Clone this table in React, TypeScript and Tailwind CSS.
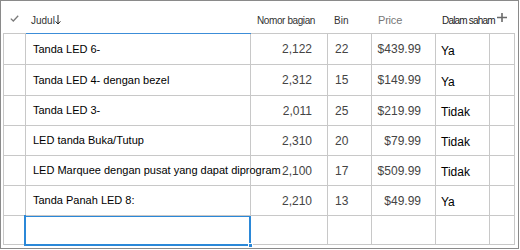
import React from 'react';

type Row = { title: string; part: string; bin: string; price: string; stock: string; h: string };

const rows: Row[] = [
  { title: 'Tanda LED 6-', part: '2,122', bin: '22', price: '$439.99', stock: 'Ya', h: 'h-[31px]' },
  { title: 'Tanda LED 4- dengan bezel', part: '2,312', bin: '15', price: '$149.99', stock: 'Ya', h: 'h-[31px]' },
  { title: 'Tanda LED 3-', part: '2,011', bin: '25', price: '$219.99', stock: 'Tidak', h: 'h-[30px]' },
  { title: 'LED tanda Buka/Tutup', part: '2,310', bin: '20', price: '$79.99', stock: 'Tidak', h: 'h-[30px]' },
  { title: 'LED Marquee dengan pusat yang dapat diprogram', part: '2,100', bin: '17', price: '$509.99', stock: 'Tidak', h: 'h-[30px]' },
  { title: 'Tanda Panah LED 8:', part: '2,210', bin: '13', price: '$49.99', stock: 'Ya', h: 'h-[30px]' },
];

const cell = 'shrink-0 border-r border-b border-[#c8c8c8] flex items-center';

export default function App() {
  return (
    <div
      className="w-[519px] h-[249px] border border-[#8a8a8a] bg-white overflow-hidden"
      style={{ fontFamily: '"Liberation Sans", Arial, sans-serif' }}
    >
      <div className="ml-[2px]">
        {/* header */}
        <div className="flex h-[33px]">
          <div className="w-[23px] h-full border-b border-[#c8c8c8] flex items-end justify-center pb-[11px]">
            <svg width="9" height="7" viewBox="0 0 9 7" className="ml-[-1px]">
              <path d="M0.8 3.6 L3.3 6 L8.2 0.8" fill="none" stroke="#7a7a7a" strokeWidth="1.3" />
            </svg>
          </div>
          <div className="w-[225px] h-full border-b border-[#3c8dd8] flex items-end pb-[5px] pl-[5px] text-[10px] text-[#333]">
            <span>Judul</span>
            <svg width="6" height="10" viewBox="0 0 6 10" className="mb-[3px]">
              <path d="M3 0 V9 M0.6 6.4 L3 9 L5.4 6.4" fill="none" stroke="#222" strokeWidth="1" />
            </svg>
          </div>
          <div className="w-[77px] h-full border-b border-[#c8c8c8] flex items-end pb-[5px] pl-[6px] text-[10px] text-[#333] tracking-[-0.4px] whitespace-nowrap">
            Nomor bagian
          </div>
          <div className="w-[44px] h-full border-b border-[#c8c8c8] flex items-end pb-[5px] pl-[6px] text-[10px] text-[#333]">
            Bin
          </div>
          <div className="w-[64px] h-full border-b border-[#c8c8c8] flex items-end pb-[5px] pl-[6px] text-[11px] text-[#777] tracking-[-0.2px]">
            Price
          </div>
          <div className="w-[79px] h-full border-b border-[#c8c8c8] flex items-end pb-[5px] pl-[6px] text-[10px] text-[#222] tracking-[-0.8px] whitespace-nowrap">
            <span>Dalam saham</span>
            <svg width="10" height="9" viewBox="0 0 10 9" className="mb-[6px] ml-[2px]">
              <path d="M5 0 V9 M0 4.5 H10" stroke="#6a6a6a" strokeWidth="1.6" />
            </svg>
          </div>
        </div>

        {/* body */}
        {rows.map((r) => (
          <div key={r.title} className={`flex border-l border-[#c8c8c8] ${r.h}`}>
            <div className={`${cell} w-[22px]`} />
            <div className={`${cell} w-[225px] pl-[7px] text-[11px] text-black whitespace-nowrap overflow-visible relative z-10`}>
              {r.title}
            </div>
            <div className={`${cell} w-[77px] justify-end pr-[15px] text-[12px] text-[#444]`}>{r.part}</div>
            <div className={`${cell} w-[44px] pl-[7px] text-[12px] text-[#444]`}>{r.bin}</div>
            <div className={`${cell} w-[64px] justify-end pr-[14px] text-[12px] text-[#444]`}>{r.price}</div>
            <div className={`${cell} w-[54px] pl-[5px] pt-[3px] text-[12px] text-black`}>{r.stock}</div>
            <div className={`${cell} w-[25px]`} />
          </div>
        ))}

        {/* new row */}
        <div className="flex border-l border-[#c8c8c8] h-[29px]">
          <div className={`${cell} w-[22px]`} />
          <div className={`${cell} w-[225px] relative`}>
            <div className="absolute -left-[2px] -top-[1px] -right-px -bottom-[2px] border-2 border-[#2b88d8]" />
            <div className="absolute -right-[3px] -bottom-[4px] w-[5px] h-[5px] bg-[#2b88d8] border border-white" />
          </div>
          <div className={`${cell} w-[77px]`} />
          <div className={`${cell} w-[44px]`} />
          <div className={`${cell} w-[64px]`} />
          <div className={`${cell} w-[54px]`} />
          <div className={`${cell} w-[25px]`} />
        </div>
      </div>
    </div>
  );
}
